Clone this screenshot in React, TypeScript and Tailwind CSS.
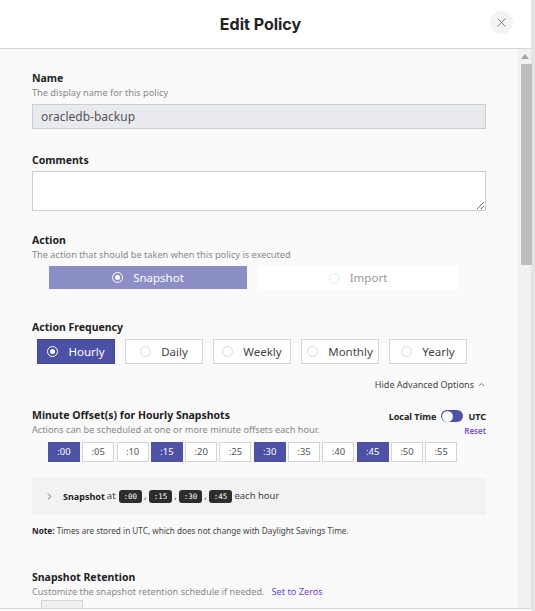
import { X, ChevronRight, ChevronUp } from "lucide-react";

const FREQUENCIES = ["Hourly", "Daily", "Weekly", "Monthly", "Yearly"];
const MINUTES = [":00", ":05", ":10", ":15", ":20", ":25", ":30", ":35", ":40", ":45", ":50", ":55"];
const SELECTED_MINUTES = [":00", ":15", ":30", ":45"];
const RETENTION = ["hourly", "daily", "weekly", "monthly", "yearly"];

function Radio({ checked, light }: { checked: boolean; light?: boolean }) {
  if (checked) {
    return (
      <span className="flex h-[11px] w-[11px] items-center justify-center rounded-full border-[1.5px] border-white">
        <span className="h-[5px] w-[5px] rounded-full bg-white" />
      </span>
    );
  }
  return (
    <span
      className={`h-[11px] w-[11px] rounded-full border ${light ? "border-[#e6e6e6]" : "border-[#d9d9d9]"}`}
    />
  );
}

function Label({ title, desc }: { title: string; desc?: string }) {
  return (
    <div>
      <div className="text-[10.5px] font-bold leading-[15px] text-[#222]">{title}</div>
      {desc && <div className="text-[9.2px] leading-[14px] text-[#888]">{desc}</div>}
    </div>
  );
}

function Chip({ children }: { children: string }) {
  return (
    <span className="rounded-[3px] bg-[#2d2d2d] px-[5px] py-[1px] font-['DejaVu_Sans_Mono',monospace] text-[7.5px] text-white">
      {children}
    </span>
  );
}

export default function App() {
  return (
    <div className="flex h-[611px] w-[535px] bg-[#e4e4e4] font-['Noto_Sans',sans-serif]">
      <div className="flex h-full w-[531px] flex-col bg-white">
        {/* Header */}
        <div className="relative flex h-[49px] shrink-0 items-center justify-center border-b border-[#d6d6d6]">
          <h1 className="mr-[10px] font-['Inter',sans-serif] text-[16px] font-bold text-[#222]">Edit Policy</h1>
          <button className="absolute right-[18px] top-[11px] flex h-[23px] w-[23px] items-center justify-center rounded-full bg-[#f3f3f3] text-[#777]">
            <X size={15} strokeWidth={1.5} />
          </button>
        </div>

        {/* Body */}
        <div className="flex h-[560px] border-b border-[#d6d6d6] bg-[#fafafa]">
          <div className="flex-1 overflow-hidden px-[32px] pb-[40px] pt-[22px]">
            <Label title="Name" desc="The display name for this policy" />
            <div className="mt-[4px] flex h-[25px] items-center border border-[#c9cdd6] bg-[#e9eaee] px-[8px] text-[12px] text-[#555]">
              oracledb-backup
            </div>

            <div className="mt-[24px]">
              <Label title="Comments" />
              <textarea className="mt-[3px] block h-[40px] w-full resize-y border border-[#c9cdd6] bg-white" />
            </div>

            <div className="mt-[22px]">
              <Label title="Action" desc="The action that should be taken when this policy is executed" />
              <div className="mt-[4px] flex gap-[11px] pl-[17px]">
                <div className="flex h-[23px] w-[198px] items-center justify-center gap-[10px] bg-[#8b8fc5] text-[11.5px] text-white">
                  <Radio checked />
                  <span>Snapshot</span>
                </div>
                <div className="flex h-[24px] w-[200px] items-center justify-center gap-[10px] bg-white text-[11.5px] text-[#999]">
                  <Radio checked={false} light />
                  <span>Import</span>
                </div>
              </div>
            </div>

            <div className="mt-[30px]">
              <Label title="Action Frequency" />
              <div className="mt-[4px] flex gap-[10px] pl-[5px]">
                {FREQUENCIES.map((f, i) => (
                  <div
                    key={f}
                    className={`flex h-[25px] w-[78px] items-center justify-center gap-[10px] border text-[11.5px] ${
                      i === 0 ? "border-[#43479a] bg-[#4c51a6] text-white" : "border-[#d4d4d4] bg-white text-[#444]"
                    }`}
                  >
                    <Radio checked={i === 0} />
                    <span>{f}</span>
                  </div>
                ))}
              </div>
            </div>

            <div className="mt-[14px] flex items-center justify-end gap-[3px] text-[9px] text-[#444]">
              Hide Advanced Options
              <ChevronUp size={9} strokeWidth={2} />
            </div>

            <div className="mt-[16px] flex items-start justify-between">
              <div>
                <div className="text-[10.5px] font-bold leading-[15px] text-[#222]">Minute Offset(s) for Hourly Snapshots</div>
                <div className="text-[9.2px] leading-[14px] text-[#888]">
                  Actions can be scheduled at one or more minute offsets each hour.
                </div>
              </div>
              <div className="flex flex-col items-end">
                <div className="mt-[2px] flex items-center gap-[5px] text-[9px] font-bold text-[#222]">
                  <span>Local Time</span>
                  <span className="flex h-[12px] w-[22px] items-center rounded-full bg-[#4c51a6] pl-[1px]">
                    <span className="h-[11px] w-[11px] rounded-full bg-white shadow-[0_0_1px_rgba(0,0,0,0.4)]" />
                  </span>
                  <span>UTC</span>
                </div>
                <a className="mt-[2px] text-[8px] font-semibold text-[#7b4fd8]">Reset</a>
              </div>
            </div>

            <div className="mt-[5px] flex gap-[2.3px] pl-[16px]">
              {MINUTES.map((m) => {
                const on = SELECTED_MINUTES.includes(m);
                return (
                  <div
                    key={m}
                    className={`flex h-[20px] w-[32px] items-center justify-center border text-[9.5px] ${
                      on ? "border-[#4c51a6] bg-[#4c51a6] text-white" : "border-[#d4d4d4] bg-white text-[#555]"
                    }`}
                  >
                    {m}
                  </div>
                );
              })}
            </div>

            <div className="mt-[16px] flex h-[37px] items-center gap-[2px] bg-[#f2f2f2] pl-[12px] text-[9.5px] text-[#444]">
              <ChevronRight size={11} strokeWidth={1.5} className="mr-[6px] text-[#333]" />
              <span className="text-[9px] font-bold text-[#222]">Snapshot</span>
              <span className="mr-[1px]">at</span>
              <Chip>:00</Chip>,<Chip>:15</Chip>,<Chip>:30</Chip>,<Chip>:45</Chip>
              <span>each hour</span>
            </div>

            <div className="mt-[10px] text-[8.2px] text-[#444]">
              <span className="font-bold text-[#222]">Note:</span> Times are stored in UTC, which does not change with Daylight Savings Time.
            </div>

            <div className="mt-[33px]">
              <div className="text-[10.5px] font-bold leading-[15px] text-[#222]">Snapshot Retention</div>
              <div className="text-[9.2px] leading-[14px] text-[#888]">
                Customize the snapshot retention schedule if needed.
                <a className="ml-[7px] text-[#6d3fd8]">Set to Zeros</a>
              </div>
            </div>

            {/* Retention inputs (mostly below the fold) */}
            <div className="mt-[1px] flex flex-col gap-[10px] pl-[9px]">
              {RETENTION.map((r) => (
                <div key={r} className="h-[34px] w-[42px] border border-[#d4d4d4] bg-[#f0f0f0]" />
              ))}
            </div>
          </div>

          {/* Scrollbar */}
          <div className="flex w-[13px] shrink-0 flex-col items-center bg-[#f1f1f1]">
            <svg width="8" height="5" viewBox="0 0 8 5" className="mt-[5px]">
              <path d="M4 0 L8 5 L0 5 Z" fill="#a3a3a3" />
            </svg>
            <div className="ml-[3px] mt-[5px] h-[201px] w-[11px] bg-[#bdbdbd]" />
          </div>
        </div>
      </div>
    </div>
  );
}
